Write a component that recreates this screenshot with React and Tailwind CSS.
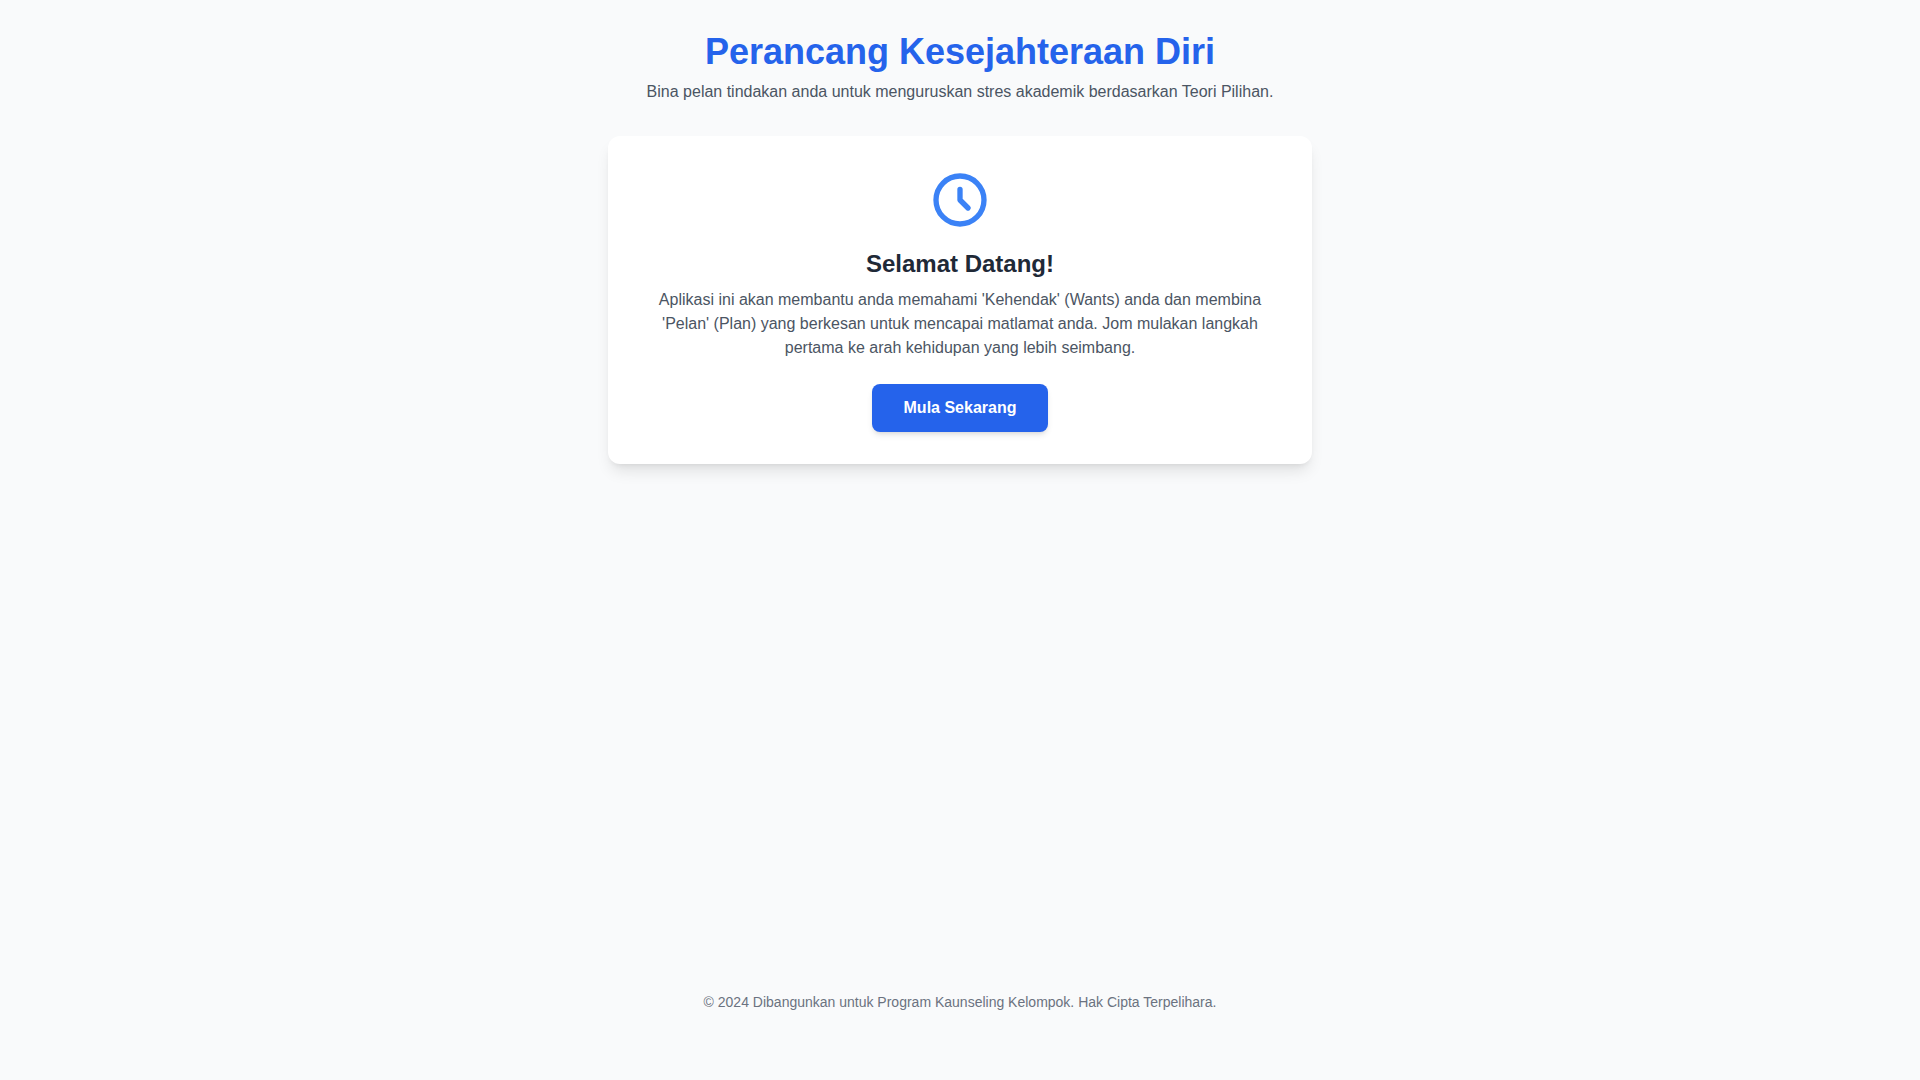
import React from "react";

export default function App() {
  return (
    <div className="flex min-h-screen flex-col items-center bg-[#f9fafb] p-4 font-['Liberation_Sans',sans-serif] text-[#1f2937]">
      <div className="w-full max-w-[704px]">
        {/* Tajuk */}
        <header className="mt-4 mb-8 text-center">
          <h1 className="text-4xl font-bold text-[#2563eb]">Perancang Kesejahteraan Diri</h1>
          <p className="mt-2 text-[#4b5563]">
            Bina pelan tindakan anda untuk menguruskan stres akademik berdasarkan Teori Pilihan.
          </p>
        </header>

        {/* Kad selamat datang */}
        <main className="rounded-xl bg-white p-8 text-center shadow-lg">
          <svg
            className="mx-auto mb-4 h-16 w-16 text-[#3b82f6]"
            fill="none"
            viewBox="0 0 24 24"
            stroke="currentColor"
            aria-hidden="true"
          >
            <path
              strokeLinecap="round"
              strokeLinejoin="round"
              strokeWidth="2"
              d="M12 8v4l3 3m6-3a9 9 0 11-18 0 9 9 0 0118 0z"
            />
          </svg>
          <h2 className="mb-2 text-2xl font-bold">Selamat Datang!</h2>
          <p className="mb-6 text-[#4b5563]">
            Aplikasi ini akan membantu anda memahami 'Kehendak' (Wants) anda dan membina 'Pelan' (Plan) yang berkesan
            untuk mencapai matlamat anda. Jom mulakan langkah pertama ke arah kehidupan yang lebih seimbang.
          </p>
          <button
            type="button"
            className="cursor-pointer rounded-lg bg-[#2563eb] px-8 py-3 font-bold text-white shadow-md hover:bg-[#1d4ed8]"
          >
            Mula Sekarang
          </button>
        </main>
      </div>

      <footer className="mt-auto pb-13 text-center text-sm text-[#6b7280]">
        <p>© 2024 Dibangunkan untuk Program Kaunseling Kelompok. Hak Cipta Terpelihara.</p>
      </footer>
    </div>
  );
}
